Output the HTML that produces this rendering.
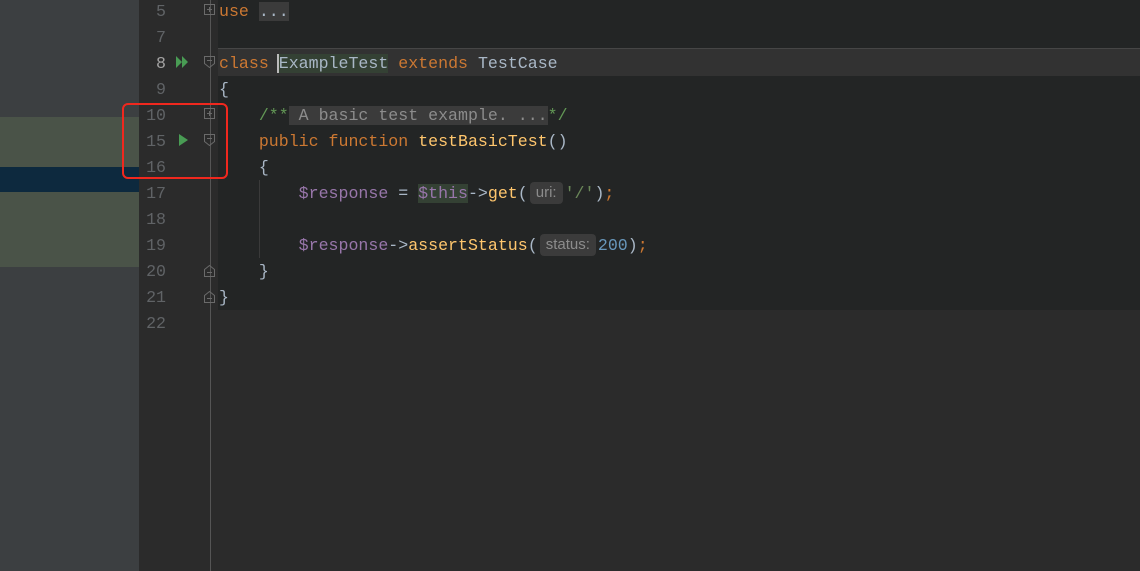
<!DOCTYPE html><html><head><style>
body{margin:0;width:1140px;height:571px;background:#2b2b2b;position:relative;overflow:hidden;font-family:"Liberation Mono",monospace;font-size:16.6px}
.a{position:absolute}
.ln{position:absolute;left:139px;width:27px;text-align:right;color:#606366;height:26px;line-height:26px;margin-top:2px}
.c{position:absolute;left:219px;height:26px;line-height:26px;white-space:pre;color:#a9b7c6;margin-top:2px}
.k{color:#cc7832}.v{color:#9876aa}.f{color:#ffc66d}.s{color:#6a8759}.n{color:#6897bb}.cm{color:#629755}
.h{display:inline-block;background:#3b3b3b;font-family:"Liberation Sans",sans-serif;font-size:15px;color:#8c8c8c;padding:0 6px;line-height:22px;border-radius:4px;margin:0 2px;vertical-align:1px}
</style></head><body>
<div class="a" style="left:0;top:0;width:139px;height:571px;background:#3c3f41"></div>
<div class="a" style="left:0;top:117px;width:139px;height:50px;background:#4a5348"></div>
<div class="a" style="left:0;top:167px;width:139px;height:25px;background:#0d293e"></div>
<div class="a" style="left:0;top:192px;width:139px;height:75px;background:#4a5348"></div>
<div class="a" style="left:218px;top:0;width:922px;height:310px;background:#232525"></div>
<div class="a" style="left:218px;top:48px;width:922px;height:27px;background:#323232;border-top:1px solid #464646"></div>
<div class="a" style="left:210px;top:0;width:1px;height:571px;background:#555"></div>
<div class="ln" style="top:-3px">5</div><div class="ln" style="top:23px">7</div>
<div class="ln" style="top:49px;color:#a4a3a3">8</div><div class="ln" style="top:75px">9</div>
<div class="ln" style="top:101px">10</div><div class="ln" style="top:127px">15</div>
<div class="ln" style="top:153px">16</div><div class="ln" style="top:179px">17</div>
<div class="ln" style="top:205px">18</div><div class="ln" style="top:231px">19</div>
<div class="ln" style="top:257px">20</div><div class="ln" style="top:283px">21</div>
<div class="ln" style="top:309px">22</div>
<svg class="a" style="left:170px;top:0" width="50" height="310">
<g fill="#499c54"><path d="M6 56l6 6-6 6zM12 56l6 6-6 6z"/><path d="M9 134l9 6-9 6z"/></g>
<g fill="none" stroke="#6a6a6a" stroke-width="1"><rect x="34.5" y="4.5" width="10" height="10"/><path d="M37 9.5h5M39.5 7v5"/>
<path d="M34.5 56.5h10v7l-5 4-5-4z M37 60.5h5"/>
<rect x="34.5" y="108.5" width="10" height="10"/><path d="M37 113.5h5M39.5 111v5"/>
<path d="M34.5 134.5h10v7l-5 4-5-4z M37 138.5h5"/>
<path d="M34.5 276.5h10v-7l-5-4-5 4z M37 272.5h5"/>
<path d="M34.5 302.5h10v-7l-5-4-5 4z M37 298.5h5"/></g></svg>
<div class="a" style="left:122px;top:103px;width:106px;height:76px;border:2.5px solid #f0281e;border-radius:6px;box-sizing:border-box"></div>
<div class="a" style="left:259px;top:180px;width:1px;height:78px;background:#3a3a3a"></div>
<div class="c" style="top:-3px"><span class="k">use</span> <span style="background:#3b3b3b">...</span></div>
<div class="c" style="top:49px"><span class="k">class</span> <span style="background:#344134;border-left:2px solid #bbb;margin-left:-2px">ExampleTest</span> <span class="k">extends</span> TestCase</div>
<div class="c" style="top:75px">{</div>
<div class="c" style="top:101px">    <span class="cm">/**</span><span style="background:#3b3b3b;color:#8c8c8c"> A basic test example. ...</span><span class="cm">*/</span></div>
<div class="c" style="top:127px">    <span class="k">public function</span> <span class="f">testBasicTest</span>()</div>
<div class="c" style="top:153px">    {</div>
<div class="c" style="top:179px">        <span class="v">$response</span> = <span class="v" style="background:#344134">$this</span>-&gt;<span class="f">get</span>(<span class="h">uri:</span><span class="s">'/'</span>)<span class="k">;</span></div>
<div class="c" style="top:231px">        <span class="v">$response</span>-&gt;<span class="f">assertStatus</span>(<span class="h">status:</span><span class="n">200</span>)<span class="k">;</span></div>
<div class="c" style="top:257px">    }</div>
<div class="c" style="top:283px">}</div>
</body></html>
